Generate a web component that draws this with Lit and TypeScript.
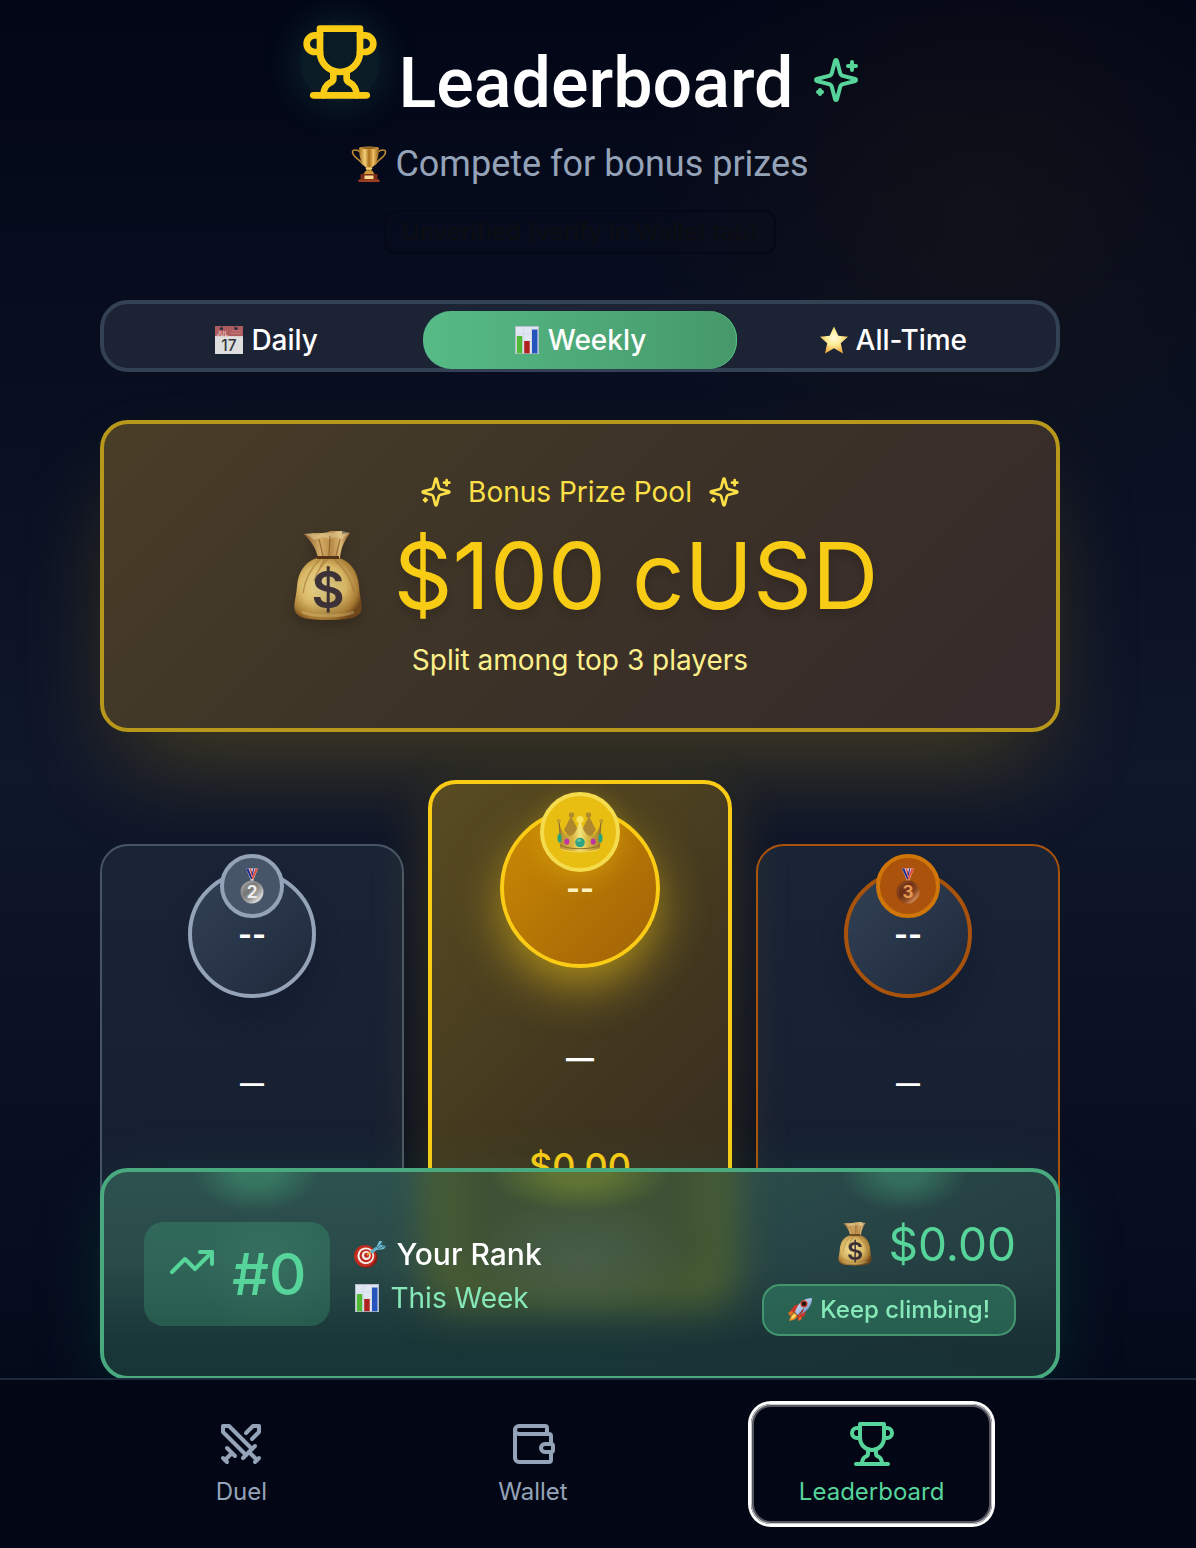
import { LitElement, html, svg, css, nothing } from "lit";
import { customElement, property, state } from "lit/decorators.js";
import { classMap } from "lit/directives/class-map.js";

/* ---------- line icons (24 unit grid) ---------- */

const lineIcons = {
  trophy: svg`<path d="M6 9H4.5a2.5 2.5 0 0 1 0-5H6"/><path d="M18 9h1.5a2.5 2.5 0 0 0 0-5H18"/><path d="M4 22h16"/><path d="M10 14.66V17c0 .55-.47.98-.97 1.21C7.85 18.75 7 20.24 7 22"/><path d="M14 14.66V17c0 .55.47.98.97 1.21C16.15 18.75 17 20.24 17 22"/><path d="M18 2H6v7a6 6 0 0 0 12 0V2Z"/>`,
  sparkles: svg`<path d="M9.937 15.5A2 2 0 0 0 8.5 14.063l-6.135-1.582a.5.5 0 0 1 0-.962L8.5 9.936A2 2 0 0 0 9.937 8.5l1.582-6.135a.5.5 0 0 1 .963 0L14.063 8.5A2 2 0 0 0 15.5 9.937l6.135 1.581a.5.5 0 0 1 0 .964L15.5 14.063a2 2 0 0 0-1.437 1.437l-1.582 6.135a.5.5 0 0 1-.963 0z"/><path d="M20 3v4"/><path d="M22 5h-4"/><path d="M4 17v2"/><path d="M5 18H3"/>`,
  trend: svg`<polyline points="22 7 13.5 15.5 8.5 10.5 2 17"/><polyline points="16 7 22 7 22 13"/>`,
  swords: svg`<polyline points="14.5 17.5 3 6 3 3 6 3 17.5 14.5"/><path d="M13 19l6-6"/><path d="M16 16l4 4"/><path d="M19 21l2-2"/><polyline points="14.5 6.5 18 3 21 3 21 6 17.5 9.5"/><path d="M5 14l4 4"/><path d="M7 17l-3 3"/><path d="M3 19l2 2"/>`,
  wallet: svg`<path d="M19 7V4a1 1 0 0 0-1-1H5a2 2 0 0 0 0 4h15a1 1 0 0 1 1 1v4h-3a2 2 0 0 0 0 4h3a1 1 0 0 0 1-1v-2a1 1 0 0 0-1-1"/><path d="M3 5v14a2 2 0 0 0 2 2h15a1 1 0 0 0 1-1v-4"/>`,
};

@customElement("line-icon")
class LineIcon extends LitElement {
  @property() name: keyof typeof lineIcons = "trophy";

  static styles = css`
    :host { display: block; flex: none; width: 48px; height: 48px; }
    svg {
      display: block; width: 100%; height: 100%; overflow: visible;
      fill: none; stroke: currentColor; stroke-width: 2;
      stroke-linecap: round; stroke-linejoin: round;
    }
  `;

  render() {
    return html`<svg viewBox="0 0 24 24" aria-hidden="true">${lineIcons[this.name]}</svg>`;
  }
}

/* ---------- colour pictograms ---------- */

const medal = (digit: string, light: string, mid: string, dark: string, ink: string) => svg`
  <defs><linearGradient id="disc" x1="0" y1="0" x2="1" y2="1"><stop offset="0" stop-color="${mid}"/><stop offset=".4" stop-color="${dark}"/><stop offset=".65" stop-color="${mid}"/><stop offset=".8" stop-color="${light}"/><stop offset="1" stop-color="${dark}"/></linearGradient></defs>
  <path d="M6 0h12l-4.500 11h-3z" fill="#f3f4fa"/>
  <path d="M6 0h2.500l4 10-1.500 1z" fill="#1d2c8c"/><path d="M9.500 0h1.600l1.800 6-1 2.500z" fill="#de4535"/>
  <path d="M18 0h-2.500l-4 10 1.500 1z" fill="#df4839"/><path d="M14.500 0h-1.300l-1.400 5 .8 2.500z" fill="#26379a"/>
  <circle cx="12" cy="12" r="1.600" fill="${light}"/>
  <circle cx="12" cy="23.500" r="11.500" fill="url(#disc)"/>
  <circle cx="12" cy="23.500" r="10.300" fill="none" stroke="${light}" stroke-opacity=".35" stroke-width=".7"/>
  <text x="12" y="29.800" text-anchor="middle" font-family="Inter, sans-serif" font-weight="700" font-size="17" fill="${ink}">${digit}</text>`;

const pictograms: Record<string, { box: string; art: unknown }> = {
  cup: {
    box: "0 0 35 36",
    art: svg`
      <defs><linearGradient id="cup" x1="0" x2="1"><stop offset="0" stop-color="#a8701c"/><stop offset=".3" stop-color="#f4cf78"/><stop offset=".5" stop-color="#a76d18"/><stop offset=".72" stop-color="#f0c164"/><stop offset="1" stop-color="#8d5b13"/></linearGradient></defs>
      <path d="M9 6C5 3 1 3.500 1 6c0 5 6 6 11 13M26 6c4-3 8-2.500 8 0 0 5-6 6-11 13" fill="none" stroke="#bd8a35" stroke-width="1.600"/>
      <path d="M7.500 2h20c0 10-3 17-7.500 20v5h-5v-5C10.500 19 7.500 12 7.500 2z" fill="url(#cup)"/>
      <ellipse cx="17.500" cy="2" rx="10" ry="1.500" fill="#d9a94c"/><ellipse cx="17.500" cy="2" rx="8.300" ry=".8" fill="#7b4a10"/>
      <ellipse cx="17.500" cy="22.500" rx="3.300" ry="1.200" fill="#f5d27c"/>
      <path d="M14 25h7l2 3H12z" fill="#cf973b"/>
      <path d="M9 28h17v6H9z" fill="#7a2c14"/><path d="M7 33.500h21V36H7z" fill="#9c4020"/>
      <path d="M13 29.500h9v3.500h-9z" fill="#f8dc93"/>`,
  },
  calendar: {
    box: "0 0 28 28",
    art: svg`
      <path d="M0 0h28v28H0z" fill="#dedede"/><path d="M0 0h28v10.500H0z" fill="#ad5c5f"/>
      <path d="M0 10.500h28" stroke="#f2eded" stroke-width=".6"/>
      <circle cx="6.500" cy="2.500" r="1.600" fill="#252b41"/><circle cx="21" cy="2.500" r="1.600" fill="#252b41"/>
      <path d="M6.500 0v2.500M21 2.500l-2-2.500" stroke="#53364a" stroke-width=".9"/>
      <path d="M17 5h9M16 7.500h10" stroke="#c4787b" stroke-width="1"/>
      <text x="1.500" y="9.500" font-family="Inter, sans-serif" font-weight="600" font-size="6" fill="#e9bfc0">JUL</text>
      <text x="14" y="25" text-anchor="middle" font-family="Inter, sans-serif" font-weight="500" font-size="15.500" fill="#33363c">17</text>`,
  },
  chart: {
    box: "0 0 24 28",
    art: svg`
      <path d="M0 0h24v28H0z" fill="#e0e7f2"/><path d="M.5.500h23v27H.500z" fill="none" stroke="#b5bdca"/>
      <path d="M8.500 1v26M16.500 1v26M1 8h22M1 15h22M1 22h22" stroke="#cdd6e4" stroke-width=".6"/>
      <path d="M1.800 10h5.500v17.300H1.800z" fill="#50b833"/><path d="M9.200 15h5.500v12.300H9.200z" fill="#b0221d"/>
      <path d="M17 3.500h5.500v23.800H17z" fill="#2554bd"/>`,
  },
  star: {
    box: "0 0 28 27",
    art: svg`
      <defs><radialGradient id="star" cx=".5" cy=".42" r=".6"><stop offset="0" stop-color="#fffbe0"/><stop offset=".45" stop-color="#fdeb95"/><stop offset="1" stop-color="#eda53a"/></radialGradient></defs>
      <path d="M14 0l4.300 9.200 9.700 1-7.200 6.600L23 27l-9-5.200L5 27l2.200-10.200L0 10.200l9.700-1z" fill="url(#star)"/>`,
  },
  moneybag: {
    box: "0 0 68 90",
    art: svg`
      <defs>
        <radialGradient id="bag" cx=".42" cy=".45" r=".62"><stop offset="0" stop-color="#f4e29a"/><stop offset=".55" stop-color="#d8b765"/><stop offset=".85" stop-color="#a87b34"/><stop offset="1" stop-color="#6f461a"/></radialGradient>
        <linearGradient id="neck" x1="0" x2="1"><stop offset="0" stop-color="#8b5b2c"/><stop offset=".35" stop-color="#d3ac66"/><stop offset=".6" stop-color="#b98a48"/><stop offset=".8" stop-color="#ddb977"/><stop offset="1" stop-color="#8a5729"/></linearGradient>
      </defs>
      <path d="M10 3l7 0 2-1 14 0 3-2 12 0 0 3 8-1c-5 7-9 14-10 25H24C22 17 17 10 10 3z" fill="url(#neck)"/>
      <path d="M10 3l8-1 6 2 8-3 5 1 10-2 9 2c-3 2-6 4-8 6l-6-2-7 2-6-2-9 3c-3-3-6-5-10-6z" fill="#e5cf9c" opacity=".5"/>
      <path d="M25 8l4 17M36 5l-1 20M46 8l-4 17" stroke="#825523" stroke-width="1.200" opacity=".7"/>
      <path d="M23 27C10 31 4 42 3 55 2 68-1 74 1 80c3 7 11 9 33 9s30-2 33-9c2-6-1-12-2-25-1-13-7-24-20-28z" fill="url(#bag)"/>
      <path d="M26 28C17 37 11 49 9 62M34 28C28 34 22 42 20 50M40 28c8 7 17 18 20 33M31 28c-3 4-5 8-6 12" fill="none" stroke="#9a7033" stroke-width="1.500" opacity=".55"/>
      <path d="M8 81c10 5 42 5 52 0" fill="none" stroke="#f0da8d" stroke-width="3" opacity=".3"/>
      <path d="M23 25h22v3H23z" fill="#573417"/>
      <text x="34" y="77" text-anchor="middle" font-family="Inter, sans-serif" font-weight="600" font-size="51" fill="#3b3136">$</text>`,
  },
  crown: {
    box: "0 0 46 40",
    art: svg`
      <defs><linearGradient id="gold" x1="0" y1="0" x2="1" y2="0"><stop offset="0" stop-color="#b28a2c"/><stop offset=".35" stop-color="#dcb945"/><stop offset=".5" stop-color="#f4e77e"/><stop offset=".7" stop-color="#d7b33d"/><stop offset="1" stop-color="#a57f2c"/></linearGradient></defs>
      <path d="M7 18L14 4l7 14-8 8zM39 18L32 4l-7 14 8 8z" fill="#ae872e"/>
      <circle cx="14.500" cy="3" r="2.700" fill="#b08d2c"/><circle cx="31.500" cy="3" r="2.700" fill="#b08d2c"/>
      <path d="M1.500 9C4 19 8 23 13 24c5-1 8-8 10-18 2 10 5 17 10 18 5-1 9-5 11.500-15L43 36c-5 4.500-35 4.500-40 0z" fill="url(#gold)"/>
      <path d="M2 10l2 18M44 10l-2 18" stroke="#8d6d27" stroke-width="1"/>
      <path d="M3 33c7 5 33 5 40 0" fill="none" stroke="#8d6e28" stroke-width="1"/>
      <path d="M4 37c8 4 30 4 38 0" fill="none" stroke="#f1dc72" stroke-width=".8"/>
      <circle cx="23" cy="7.500" r="3.600" fill="#f5e25f"/><circle cx="1.800" cy="9" r="2" fill="#c19a31"/><circle cx="44.200" cy="9" r="2" fill="#c19a31"/>
      <ellipse cx="2.500" cy="26" rx="2" ry="4.500" fill="#28a37b"/><ellipse cx="43.500" cy="26" rx="2" ry="4.500" fill="#28a37b"/>
      <ellipse cx="9.800" cy="29.500" rx="2.500" ry="3.100" fill="#be36a5"/><ellipse cx="36.200" cy="29.500" rx="2.500" ry="3.100" fill="#be36a5"/>
      <circle cx="23" cy="30.500" r="4.800" fill="#2ba384"/><ellipse cx="22" cy="28.500" rx="2.200" ry="1.400" fill="#83cfa5" opacity=".7"/>`,
  },
  silver: { box: "0 0 24 35", art: medal("2", "#d8d8d8", "#a3a3a3", "#777777", "#ededed") },
  bronze: { box: "0 0 24 35", art: medal("3", "#c9814d", "#8e4a20", "#6d2f12", "#e79a53") },
  target: {
    box: "0 0 32 28",
    art: svg`
      <ellipse cx="12.500" cy="17.500" rx="11" ry="10.500" fill="#7d1d17"/><circle cx="11" cy="16" r="11" fill="#c22b20"/>
      <circle cx="11.800" cy="15.800" r="8.400" fill="#f6eee8"/><circle cx="12" cy="15.700" r="6.500" fill="#bf2c21"/>
      <circle cx="12.300" cy="15.500" r="4.500" fill="#f6eee8"/><circle cx="12.600" cy="15.300" r="2.500" fill="#bf2c21"/>
      <path d="M13 15L21 9" stroke="#e9a53c" stroke-width="1.800"/><path d="M17 12.500l6-4.500" stroke="#5fafc6" stroke-width="3.400"/>
      <path d="M22 8l3-7 3 0-1 4 5 1-2 3-6 1z" fill="#6fb9cc"/><path d="M23 8l7-7M24 9l7-3" stroke="#2c6173" stroke-width=".8"/>`,
  },
  rocket: {
    box: "0 0 24 24",
    art: svg`
      <defs><linearGradient id="hull" x1="0" y1="0" x2="1" y2="1"><stop offset="0" stop-color="#eef3fb"/><stop offset=".55" stop-color="#9db9e2"/><stop offset="1" stop-color="#3d67a6"/></linearGradient></defs>
      <path d="M8 15l-6-2 5-6 6-1zM9 16l1 7 7-6 1-6z" fill="#c8382a"/>
      <path d="M7 15C3 15 3 19 1 23c5-1 8-2 8-6z" fill="#f08b25"/><path d="M7 16c-3 1-3 3-4 5 3-1 4-2 5-4z" fill="#fce26b"/>
      <path d="M0 15l3-2 3 1-4 4zM10 23l2-5 2 3z" fill="#ee6a22"/>
      <path d="M24 0c-8 0-14 5-17 14l3 3C19 14 24 8 24 0z" fill="url(#hull)"/>
      <circle cx="16" cy="5.800" r="3.600" fill="#c5482f"/><circle cx="16" cy="5.800" r="2.400" fill="#2b1510"/>
      <path d="M16 10l-6 7 2-1c3-2 4-4 4-6z" fill="#8d2019"/>`,
  },
};

@customElement("picto-icon")
class PictoIcon extends LitElement {
  @property() name = "star";

  static styles = css`
    :host { display: block; flex: none; }
    svg { display: block; width: 100%; height: 100%; overflow: visible; }
  `;

  render() {
    const icon = pictograms[this.name];
    return html`<svg viewBox=${icon.box} aria-hidden="true">${icon.art}</svg>`;
  }
}

/* ---------- podium ---------- */

type Place = "first" | "second" | "third";

@customElement("podium-card")
class PodiumCard extends LitElement {
  @property({ reflect: true }) place: Place = "second";
  @property() initials = "--";
  @property() player = "—";
  @property() prize = "$0.00";

  static styles = css`
    :host {
      display: flex; flex-direction: column; align-items: center; box-sizing: border-box;
      min-width: 0; padding: 24px 24px 30px; color: #fff;
      border: 2px solid #475569; border-radius: 28px;
      background: linear-gradient(180deg, rgba(30, 41, 59, 0.72), rgba(28, 38, 54, 0.72));
    }
    :host([place="third"]) { border-color: #a8520c; }
    :host([place="first"]) {
      position: relative; border: 4px solid #facc15; padding-bottom: 30px;
      background: linear-gradient(135deg, #594c21, #41371f 55%, #352a22);
      box-shadow: 0 20px 60px rgba(234, 179, 8, 0.2);
    }
    .avatar {
      position: relative; display: flex; align-items: center; justify-content: center;
      box-sizing: border-box; width: 128px; height: 128px; border-radius: 50%;
      border: 4px solid #94a3b8; background: linear-gradient(135deg, #334155, #1e293b);
      box-shadow: 0 20px 30px -6px rgba(10, 18, 36, 0.35);
      font-size: 30px; line-height: 40px; font-weight: 700;
    }
    .third .avatar { border-color: #a8520c; }
    .first .avatar {
      width: 160px; height: 160px; border-color: #facc15;
      background: linear-gradient(135deg, #ca8a04, #a16207);
      box-shadow: 0 20px 50px -4px rgba(250, 204, 21, 0.6);
      color: #fef3c7;
    }
    .badge {
      position: absolute; top: -20px; left: 50%; transform: translateX(-50%);
      display: flex; align-items: center; justify-content: center; box-sizing: border-box;
      width: 64px; height: 64px; border-radius: 50%;
      border: 4px solid #94a3b8; background: #475569;
    }
    .third .badge { border-color: #d07508; background: #ab530c; }
    .first .badge {
      width: 80px; height: 80px; border-color: #f5dc4c; background: #e9be12;
      box-shadow: 0 8px 24px rgba(250, 204, 21, 0.3);
    }
    .medal { width: 24px; height: 36px; }
    .crown { width: 46px; height: 40px; }
    .body { display: contents; }
    .name { margin: 70px 0 64px; font-size: 24px; line-height: 32px; font-weight: 700; }
    .first .name { font-size: 28px; line-height: 40px; }
    .prize { margin-bottom: 72px; font-size: 32px; line-height: 40px; font-weight: 500; color: #56d49a; }
    .first .prize { margin-bottom: 84px; font-size: 36px; line-height: 48px; color: #facc15; }
  `;

  render() {
    const first = this.place === "first";
    const art = first ? "crown" : this.place === "second" ? "silver" : "bronze";
    return html`
      <div class=${classMap({ body: true, [this.place]: true })}>
        <div class="avatar">
          <span>${this.initials}</span>
          <span class="badge"><picto-icon class=${first ? "crown" : "medal"} name=${art}></picto-icon></span>
        </div>
        <div class="name">${this.player}</div>
        <div class="prize">${this.prize}</div>
      </div>
    `;
  }
}

/* ---------- page ---------- */

const tabs = [
  { id: "daily", label: "Daily", icon: "calendar" },
  { id: "weekly", label: "Weekly", icon: "chart" },
  { id: "all", label: "All-Time", icon: "star" },
];

const links = [
  { id: "duel", label: "Duel", icon: "swords" },
  { id: "wallet", label: "Wallet", icon: "wallet" },
  { id: "leaderboard", label: "Leaderboard", icon: "trophy" },
];

@customElement("app-root")
class AppRoot extends LitElement {
  @state() private tab = "weekly";

  static styles = css`
    :host {
      display: flex; flex-direction: column; height: 100vh; overflow: hidden;
      font-family: Inter, "Liberation Sans", sans-serif; color: #fff;
      background:
        radial-gradient(circle at 82% 13%, rgba(60, 45, 10, 0.2), transparent 340px),
        linear-gradient(180deg, #020617, #0f172a 50%, #020617);
    }
    main { flex: 1; min-height: 0; overflow-y: auto; scrollbar-width: none; padding: 22px 136px 0 100px; }
    .column { display: flex; flex-direction: column; max-width: 960px; margin: 0 auto; }
    h1, .subtitle { font-family: Roboto, "Liberation Sans", sans-serif; }

    header { display: flex; flex-direction: column; align-items: center; }
    .title { display: flex; align-items: center; gap: 18px; }
    h1 { margin: 0; padding-top: 6px; font-size: 70px; line-height: 110px; font-weight: 500; }
    .hero { align-self: flex-start; width: 80px; height: 80px; color: #facc15; border-radius: 50%;
      background: rgba(70, 190, 150, 0.11); box-shadow: 0 0 32px 10px rgba(70, 190, 150, 0.11); }
    .spark { color: #56d49a; }
    .subtitle { display: flex; align-items: center; gap: 8px; margin: 2px 0 0; font-size: 36px; line-height: 48px; color: #94a3b8; }
    .cup { width: 36px; height: 36px; }
    .notice { margin-top: 22px; padding: 4px 16px; border: 2px solid #040817; border-radius: 12px;
      font-size: 24px; line-height: 32px; font-weight: 500; color: #0b0d12; }

    .tabs { display: grid; grid-template-columns: repeat(3, 1fr); box-sizing: border-box; height: 72px;
      margin-top: 46px; padding: 7px 6px 0; border: 4px solid #334155; border-radius: 28px; background: #1c2334; }
    .tab { display: flex; align-items: center; justify-content: center; gap: 8px; height: 58px; padding: 0;
      border: 0; border-radius: 28px; background: none; color: #fff; font: 500 28px/40px Inter, "Liberation Sans", sans-serif; }
    .tab.active { background: linear-gradient(90deg, #56bb86, #46986a); box-shadow: inset -1px 0 0 #4fc084; }
    .calendar, .star { width: 28px; height: 28px; }
    .chart { width: 26px; height: 28px; }

    .pool { display: flex; flex-direction: column; align-items: center; margin-top: 48px; padding: 48px 24px;
      border: 4px solid #b8981a; border-radius: 28px; background: linear-gradient(135deg, #493e27, #3c3227 50%, #362a2c);
      box-shadow: 0 50px 100px -24px rgba(234, 179, 8, 0.26); }
    .pool-label { display: flex; align-items: center; gap: 16px; font-size: 28px; line-height: 40px; color: #fde047; }
    .small { width: 32px; height: 32px; }
    .amount { display: flex; align-items: center; gap: 20px; font-size: 92px; line-height: 128px; color: #f8cc14;
      text-shadow: 0 6px 8px rgba(0, 0, 0, 0.15); }
    .bag { width: 92px; height: 90px; filter: drop-shadow(0 6px 6px rgba(0, 0, 0, 0.2)); }
    .split { font-size: 28px; line-height: 40px; color: #fef08a; }

    .podium { display: grid; grid-template-columns: repeat(3, 1fr); align-items: end; gap: 24px; margin-top: 48px; }

    /* Frosted panel: a soft golden column and two green glows stand for the podium behind it. */
    .rank { position: sticky; bottom: 0; display: flex; align-items: center; gap: 24px; box-sizing: border-box; overflow: hidden;
      margin-top: 48px; padding: 40px; border: 4px solid #49aa7f; border-radius: 28px;
      background: linear-gradient(90deg, transparent 50%, rgba(24, 30, 44, 0.32)),
        linear-gradient(180deg, #2d524f, #294a49 45%, #1b3739 85%);
      box-shadow: 0 20px 80px -10px rgba(16, 185, 129, 0.18); }
    .rank::before { content: ""; position: absolute; z-index: -1; top: -60px; bottom: 68px; left: 34%; width: 32%; box-sizing: border-box;
      border: 18px solid #5b6a2a; border-radius: 28px; background: #3e5335; filter: blur(20px); }
    .rank::after { content: ""; position: absolute; z-index: -1; inset: 0;
      background:
        radial-gradient(64px 40px at 16% 0, rgba(58, 130, 102, 0.75) 30%, transparent),
        radial-gradient(64px 40px at 84% 0, rgba(58, 130, 102, 0.65) 30%, transparent),
        radial-gradient(90px 40px at 50% 0, rgba(110, 130, 52, 0.7) 30%, transparent),
        radial-gradient(110px 64px at 50% 42%, rgba(80, 100, 90, 0.55), transparent),
        linear-gradient(180deg, transparent 55%, rgba(20, 50, 50, 0.35)); }
    .place { display: flex; align-items: flex-start; gap: 16px; padding: 16px 24px; border-radius: 20px;
      background: radial-gradient(circle at 65% 45%, rgba(72, 160, 126, 0.42), rgba(60, 160, 120, 0.32) 50%);
      color: #56d49a; font-size: 58px; line-height: 72px; font-weight: 500; }
    .info { display: flex; flex-direction: column; flex: 1; }
    .line { display: flex; align-items: center; gap: 10px; }
    .who { font-size: 30px; line-height: 48px; font-weight: 500; }
    .period { font-size: 28px; line-height: 40px; color: #86e8b8; }
    .target { width: 32px; height: 28px; }
    .earned { display: flex; flex-direction: column; align-items: flex-end; gap: 8px; }
    .total { display: flex; align-items: center; gap: 16px; font-size: 46px; line-height: 64px; font-weight: 400; color: #56d49a; }
    .purse { width: 36px; height: 44px; }
    .cheer { display: flex; align-items: center; gap: 8px; padding: 8px 24px; border: 2px solid #43956f; border-radius: 18px;
      background: rgba(52, 140, 105, 0.5); font-size: 24px; line-height: 32px; font-weight: 500; color: #86e8b8; }
    .rocket { width: 24px; height: 24px; }

    nav { position: relative; margin-top: -2px; padding: 24px 136px 24px 100px; border-top: 2px solid #1e293b; background: #020615; }
    .links { display: flex; justify-content: space-around; max-width: 960px; margin: 0 auto; }
    .link { display: flex; flex-direction: column; align-items: center; gap: 8px; padding: 16px 48px; border-radius: 20px;
      color: #94a3b8; text-decoration: none; font-size: 24px; line-height: 32px; }
    .link.current { color: #56d49a;
      box-shadow: 0 0 0 3px #fff, inset 0 0 0 1px #c9c9cd, inset 0 0 0 3px #54555e; }
  `;

  render() {
    return html`
      <main>
        <div class="column">
          <header>
            <div class="title">
              <line-icon class="hero" name="trophy"></line-icon>
              <h1>Leaderboard</h1>
              <line-icon class="spark" name="sparkles"></line-icon>
            </div>
            <p class="subtitle"><picto-icon class="cup" name="cup"></picto-icon>Compete for bonus prizes</p>
            <div class="notice">Unverified (verify in Wallet tab)</div>
          </header>

          <div class="tabs" role="tablist">
            ${tabs.map((t) => html`
              <button role="tab" aria-selected=${t.id === this.tab} class=${classMap({ tab: true, active: t.id === this.tab })}
                @click=${() => (this.tab = t.id)}>
                <picto-icon class=${t.icon} name=${t.icon}></picto-icon>${t.label}
              </button>`)}
          </div>

          <section class="pool">
            <div class="pool-label">
              <line-icon class="small" name="sparkles"></line-icon>
              <span>Bonus Prize Pool</span>
              <line-icon class="small" name="sparkles"></line-icon>
            </div>
            <div class="amount"><picto-icon class="bag" name="moneybag"></picto-icon><span>$100 cUSD</span></div>
            <div class="split">Split among top 3 players</div>
          </section>

          <section class="podium">
            <podium-card place="second"></podium-card>
            <podium-card place="first"></podium-card>
            <podium-card place="third"></podium-card>
          </section>

          <section class="rank">
            <div class="place"><line-icon name="trend"></line-icon><span>#0</span></div>
            <div class="info">
              <div class="line who"><picto-icon class="target" name="target"></picto-icon>Your Rank</div>
              <div class="line period"><picto-icon class="chart" name="chart"></picto-icon>This Week</div>
            </div>
            <div class="earned">
              <div class="total"><picto-icon class="purse" name="moneybag"></picto-icon><span>$0.00</span></div>
              <div class="cheer"><picto-icon class="rocket" name="rocket"></picto-icon>Keep climbing!</div>
            </div>
          </section>
        </div>
      </main>

      <nav>
        <div class="links">
          ${links.map((l) => html`
            <a href="#${l.id}" class=${classMap({ link: true, current: l.id === "leaderboard" })}
              aria-current=${l.id === "leaderboard" ? "page" : nothing}>
              <line-icon name=${l.icon}></line-icon>${l.label}
            </a>`)}
        </div>
      </nav>
    `;
  }
}
